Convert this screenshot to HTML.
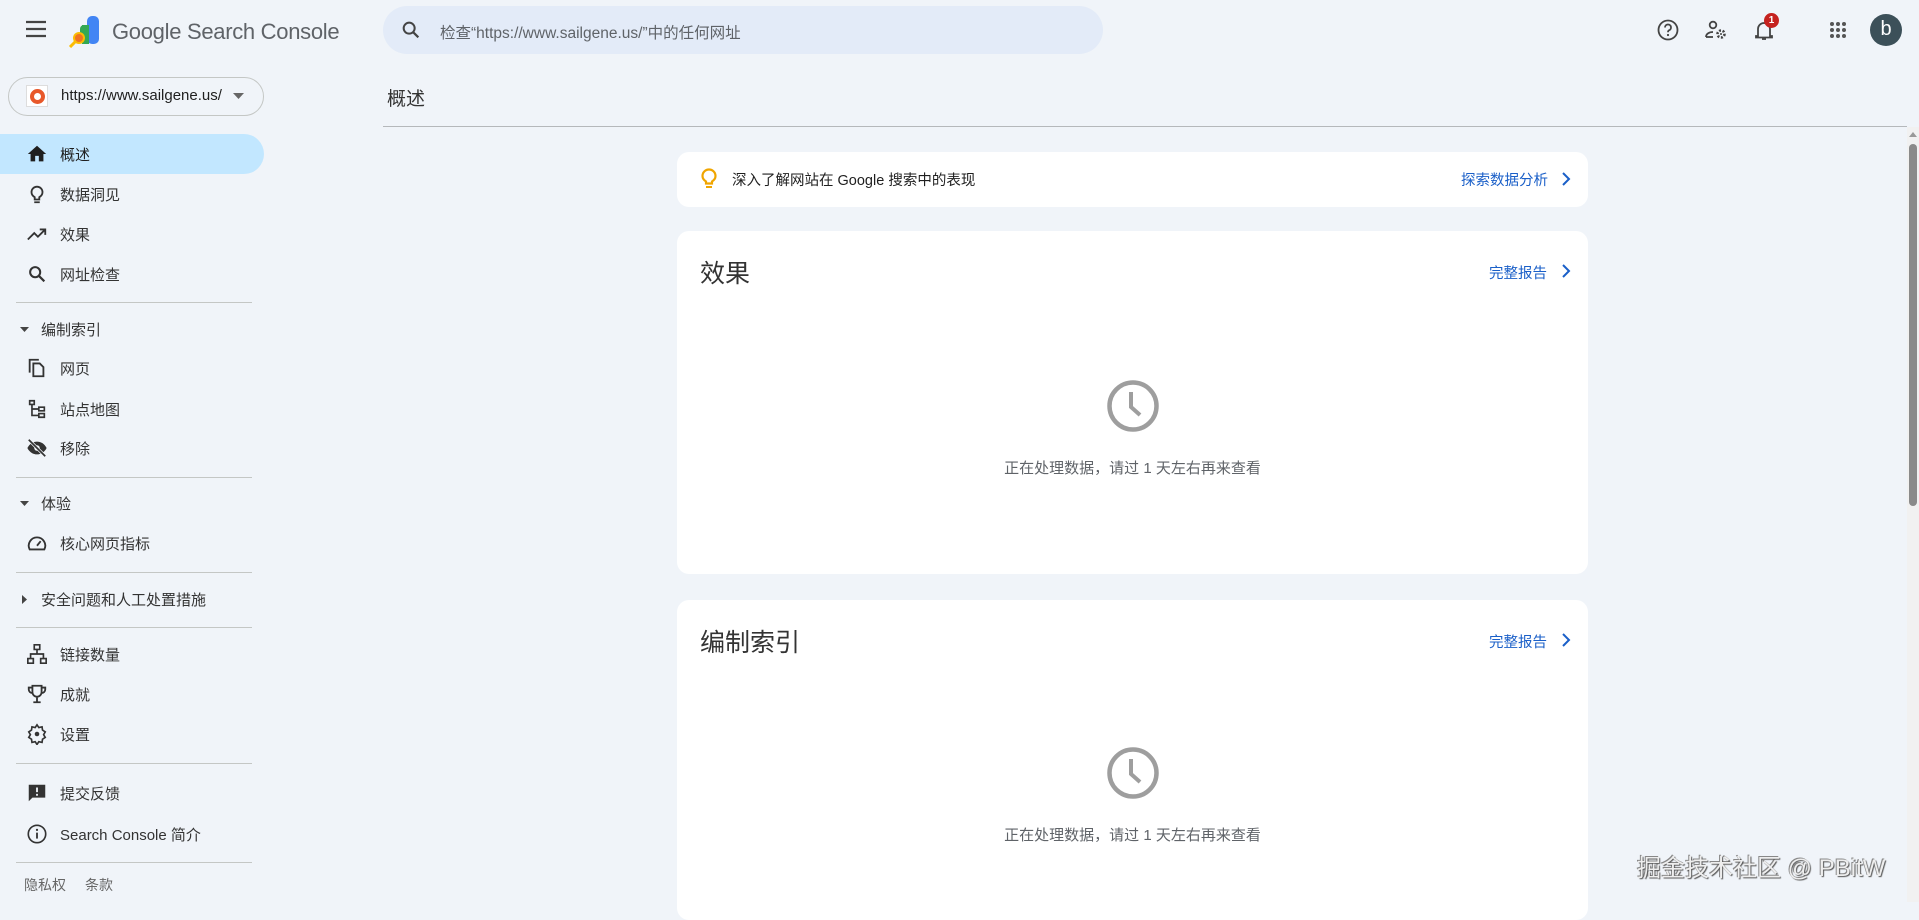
<!DOCTYPE html>
<html><head><meta charset="utf-8"><style>
*{box-sizing:border-box;margin:0;padding:0}
body{width:1919px;height:902px;overflow:hidden;background:#f0f4f9;font-family:"Liberation Sans","Noto Sans CJK SC",sans-serif;color:#1f1f1f;position:relative}
.abs{position:absolute}
.nav{position:absolute;left:0;width:263px;height:40px;display:flex;align-items:center;font-size:15px;color:#333}
.nav svg{position:absolute;left:26px;width:22px;height:22px}
.nav span{position:absolute;left:60px}
.sec{position:absolute;left:20px;font-size:15px;color:#333;display:flex;align-items:center}
.div{position:absolute;left:16px;width:236px;height:1px;background:#c4c7c5}
.card{position:absolute;left:677px;width:911px;background:#fff;border-radius:12px}
.link{position:absolute;color:#1a5fc8;font-size:14.5px}
.chev{position:absolute;width:10px;height:16px}
.msg{position:absolute;left:0;width:911px;text-align:center;font-size:15px;color:#5f6368}
</style></head><body>
<svg class="abs" style="left:25px;top:20px" width="22" height="18" viewBox="0 0 22 18"><path d="M1 2h20M1 9h20M1 16h20" stroke="#444" stroke-width="2.2"/></svg>
<svg class="abs" style="left:68px;top:14px" width="34" height="34" viewBox="0 0 34 34"><rect x="12" y="11" width="9" height="19" rx="4" fill="#34a853"/><rect x="19" y="2" width="12" height="28" rx="5" fill="#4285f4"/><rect x="14" y="11" width="7" height="19" fill="#34a853"/><circle cx="11" cy="24" r="6" fill="#fbbc04"/><circle cx="11" cy="24" r="4" fill="#ea4335" opacity=".6"/><path d="M7 28L2 33" stroke="#fbbc04" stroke-width="3"/></svg>
<div class="abs" style="left:112px;top:19px;font-size:22px;color:#5f6368;letter-spacing:-0.3px">Google Search Console</div>
<div class="abs" style="left:383px;top:6px;width:720px;height:48px;border-radius:24px;background:#e3ebf8"></div>
<svg class="abs" style="left:400px;top:19px" width="22" height="22" viewBox="0 0 24 24"><circle cx="10" cy="10" r="6" fill="none" stroke="#444" stroke-width="2.2"/><path d="M14.5 14.5L20 20" stroke="#444" stroke-width="2.4"/></svg>
<div class="abs" style="left:440px;top:21px;font-size:15.5px;color:#5f6368">检查“https://www.sailgene.us/”中的任何网址</div>
<svg class="abs" style="left:1656px;top:18px" width="24" height="24" viewBox="0 0 24 24"><circle cx="12" cy="12" r="9.5" fill="none" stroke="#444" stroke-width="1.8"/><path d="M9 9.5a3 3 0 1 1 4 2.8c-.8.4-1 1-1 2" fill="none" stroke="#444" stroke-width="1.8"/><circle cx="12" cy="17" r="1.1" fill="#444"/></svg>
<svg class="abs" style="left:1704px;top:18px" width="24" height="24" viewBox="0 0 24 24"><circle cx="9" cy="7" r="3.3" fill="none" stroke="#444" stroke-width="1.8"/><path d="M2 19c0-3 3-5 7-5" fill="none" stroke="#444" stroke-width="1.8"/><path d="M2 19h7" stroke="#444" stroke-width="1.8"/><circle cx="17" cy="16" r="3.5" fill="none" stroke="#444" stroke-width="2.6" stroke-dasharray="2 1.6"/><circle cx="17" cy="16" r="1" fill="#444"/></svg>
<svg class="abs" style="left:1752px;top:18px" width="24" height="24" viewBox="0 0 24 24"><path d="M6 18V11a6 6 0 0 1 12 0v7h2v1.5H4V18z" fill="none" stroke="#444" stroke-width="1.8"/><path d="M10 21h4" stroke="#444" stroke-width="1.8"/></svg>
<div class="abs" style="left:1764px;top:13px;width:15px;height:15px;border-radius:50%;background:#c5221f;color:#fff;font-size:10px;font-weight:bold;text-align:center;line-height:15px">1</div>
<svg class="abs" style="left:1829px;top:21px" width="18" height="18" viewBox="0 0 18 18" fill="#555"><circle cx="3" cy="3" r="2"/><circle cx="9" cy="3" r="2"/><circle cx="15" cy="3" r="2"/><circle cx="3" cy="9" r="2"/><circle cx="9" cy="9" r="2"/><circle cx="15" cy="9" r="2"/><circle cx="3" cy="15" r="2"/><circle cx="9" cy="15" r="2"/><circle cx="15" cy="15" r="2"/></svg>
<div class="abs" style="left:1870px;top:14px;width:32px;height:32px;border-radius:50%;background:#3c5059;color:#fff;font-size:20px;text-align:center;line-height:30px">b</div>
<div class="abs" style="left:8px;top:77px;width:256px;height:39px;border:1px solid #c4c7c5;border-radius:20px"></div>
<div class="abs" style="left:26px;top:85px;width:22px;height:22px;background:#fff;border:1px solid #ddd"><div style="margin:3px;width:15px;height:15px;border-radius:50%;border:4px solid #e8582a"></div></div>
<div class="abs" style="left:61px;top:87px;font-size:15px;color:#1f1f1f">https://www.sailgene.us/</div>
<svg class="abs" style="left:233px;top:93px" width="12" height="7"><path d="M0 0h11L5.5 6z" fill="#666"/></svg>
<div class="abs" style="left:0;top:134px;width:264px;height:40px;background:#c2e7ff;border-radius:0 20px 20px 0"></div>
<div class="nav" style="top:134px;color:#1f1f1f"><svg viewBox="0 0 24 24"><path d="M10 20v-6h4v6h5v-8h3L12 3 2 12h3v8z" fill="#1f1f1f"/></svg><span>概述</span></div>
<div class="nav" style="top:174px"><svg viewBox="0 0 24 24"><path d="M9 21h6M9.5 18h5v-2.5c2-1.2 3.5-3.2 3.5-5.5a6 6 0 0 0-12 0c0 2.3 1.5 4.3 3.5 5.5z" fill="none" stroke="#333" stroke-width="2"/></svg><span>数据洞见</span></div>
<div class="nav" style="top:214px"><svg viewBox="0 0 24 24"><path d="M2 18l7-7 4 4 7-7M15 7h6v6" fill="none" stroke="#333" stroke-width="2"/></svg><span>效果</span></div>
<div class="nav" style="top:254px"><svg viewBox="0 0 24 24"><circle cx="10" cy="10" r="5.5" fill="none" stroke="#333" stroke-width="2.2"/><path d="M14 14l6 6" stroke="#333" stroke-width="2.4"/></svg><span>网址检查</span></div>
<div class="div" style="top:302px"></div>
<div class="sec" style="top:319px"><svg width="10" height="6" style="margin-right:11px"><path d="M0 0h9L4.5 5z" fill="#444"/></svg>编制索引</div>
<div class="nav" style="top:348px"><svg viewBox="0 0 24 24"><path d="M4 17V3h10" fill="none" stroke="#333" stroke-width="2"/><path d="M8 7h7l4 4v10H8z" fill="none" stroke="#333" stroke-width="2"/></svg><span>网页</span></div>
<div class="nav" style="top:389px"><svg viewBox="0 0 24 24"><path d="M4 3h5v4H4zM14 10h6v4h-6zM14 17h6v4h-6zM6.5 7v12h7.5M6.5 12h7.5" fill="none" stroke="#333" stroke-width="1.8"/></svg><span>站点地图</span></div>
<div class="nav" style="top:428px"><svg viewBox="0 0 24 24"><path d="M1.5 12C4 7 8 5 12 5s8 2 10.5 7c-2.5 5-6.5 7-10.5 7S4 17 1.5 12z" fill="#333"/><circle cx="12" cy="12" r="3" fill="#f0f4f9"/><path d="M3 3l18 18" stroke="#f0f4f9" stroke-width="3.5"/><path d="M3 3l18 18" stroke="#333" stroke-width="1.8"/></svg><span>移除</span></div>
<div class="div" style="top:477px"></div>
<div class="sec" style="top:493px"><svg width="10" height="6" style="margin-right:11px"><path d="M0 0h9L4.5 5z" fill="#444"/></svg>体验</div>
<div class="nav" style="top:523px"><svg viewBox="0 0 24 24"><path d="M4 19a9 9 0 1 1 16 0z" fill="none" stroke="#333" stroke-width="2"/><path d="M12 15l4-5" stroke="#333" stroke-width="2"/></svg><span>核心网页指标</span></div>
<div class="div" style="top:572px"></div>
<div class="sec" style="top:589px"><svg width="6" height="10" style="margin-right:13px;margin-left:2px"><path d="M0 0v9l5-4.5z" fill="#444"/></svg>安全问题和人工处置措施</div>
<div class="div" style="top:627px"></div>
<div class="nav" style="top:634px"><svg viewBox="0 0 24 24"><path d="M9 2h6v5H9zM2 17h6v5H2zM16 17h6v5h-6zM12 7v5M5 17v-5h14v5" fill="none" stroke="#333" stroke-width="1.8"/></svg><span>链接数量</span></div>
<div class="nav" style="top:674px"><svg viewBox="0 0 24 24"><path d="M7 3h10v7a5 5 0 0 1-10 0zM7 5H3v2a4 4 0 0 0 4 4M17 5h4v2a4 4 0 0 1-4 4M12 15v5M8 21h8" fill="none" stroke="#333" stroke-width="2"/></svg><span>成就</span></div>
<div class="nav" style="top:714px"><svg viewBox="0 0 24 24"><path d="M12 2l2 3 3.5-.8.5 3.5 3 2-1.8 3 1.8 3-3 2-.5 3.5-3.5-.8-2 3-2-3-3.5.8-.5-3.5-3-2 1.8-3L3 9.7l3-2 .5-3.5 3.5.8z" fill="none" stroke="#333" stroke-width="1.8"/><circle cx="12" cy="12" r="2.5" fill="#333"/></svg><span>设置</span></div>
<div class="div" style="top:763px"></div>
<div class="nav" style="top:773px"><svg viewBox="0 0 24 24"><path d="M3 3h18v14H7l-4 4z" fill="#333"/><path d="M12 6v5M12 13v2" stroke="#f0f4f9" stroke-width="2"/></svg><span>提交反馈</span></div>
<div class="nav" style="top:814px"><svg viewBox="0 0 24 24"><circle cx="12" cy="12" r="9.5" fill="none" stroke="#333" stroke-width="1.8"/><path d="M12 10.5v6.5" stroke="#333" stroke-width="2"/><circle cx="12" cy="7.5" r="1.2" fill="#333"/></svg><span>Search Console 简介</span></div>
<div class="div" style="top:862px"></div>
<div class="abs" style="left:24px;top:875px;font-size:14px;color:#666">隐私权</div>
<div class="abs" style="left:85px;top:875px;font-size:14px;color:#666">条款</div>
<div class="abs" style="left:387px;top:84px;font-size:19px;color:#333">概述</div>
<div class="abs" style="left:383px;top:126px;width:1524px;height:1px;background:#b5b8bb"></div>
<div class="abs" style="left:1907px;top:127px;width:12px;height:775px;background:#f1f1f1"></div>
<svg class="abs" style="left:1908px;top:130px" width="10" height="8"><path d="M1 7h8L5 2z" fill="#999"/></svg>
<div class="abs" style="left:1909px;top:144px;width:8px;height:362px;background:#8a8a8a;border-radius:4px"></div>
<div class="card" style="top:152px;height:55px">
<svg class="abs" style="left:24px;top:16px" width="16" height="22" viewBox="0 0 16 22"><path d="M5 15.5h6v-2c2-1.3 3.5-3 3.5-5.5a6.5 6.5 0 0 0-13 0c0 2.5 1.5 4.2 3.5 5.5z" fill="none" stroke="#f0a500" stroke-width="2.2"/><path d="M5 19h6" stroke="#f0a500" stroke-width="2"/></svg>
<div class="abs" style="left:55px;top:17px;font-size:14.5px;color:#1f1f1f">深入了解网站在 Google 搜索中的表现</div>
<div class="link" style="left:784px;top:17px">探索数据分析</div>
<svg class="chev" style="left:884px;top:19px" viewBox="0 0 10 16"><path d="M2 2l6 6-6 6" fill="none" stroke="#1a5fc8" stroke-width="2"/></svg>
</div>
<div class="card" style="top:231px;height:343px">
<div class="abs" style="left:23px;top:23px;font-size:25px;color:#333">效果</div>
<div class="link" style="left:812px;top:31px">完整报告</div>
<svg class="chev" style="left:884px;top:32px" viewBox="0 0 10 16"><path d="M2 2l6 6-6 6" fill="none" stroke="#1a5fc8" stroke-width="2"/></svg>
<svg class="abs" style="left:428px;top:147px" width="56" height="56" viewBox="0 0 56 56"><circle cx="28" cy="28" r="23.5" fill="none" stroke="#9e9e9e" stroke-width="4.5"/><path d="M26 14v15l9 8" fill="none" stroke="#9e9e9e" stroke-width="4"/></svg>
<div class="msg" style="top:226px">正在处理数据，请过 1 天左右再来查看</div>
</div>
<div class="card" style="top:600px;height:320px">
<div class="abs" style="left:23px;top:23px;font-size:25px;color:#333">编制索引</div>
<div class="link" style="left:812px;top:31px">完整报告</div>
<svg class="chev" style="left:884px;top:32px" viewBox="0 0 10 16"><path d="M2 2l6 6-6 6" fill="none" stroke="#1a5fc8" stroke-width="2"/></svg>
<svg class="abs" style="left:428px;top:145px" width="56" height="56" viewBox="0 0 56 56"><circle cx="28" cy="28" r="23.5" fill="none" stroke="#9e9e9e" stroke-width="4.5"/><path d="M26 14v15l9 8" fill="none" stroke="#9e9e9e" stroke-width="4"/></svg>
<div class="msg" style="top:224px">正在处理数据，请过 1 天左右再来查看</div>
</div>
<div class="abs" style="left:1637px;top:848px;font-size:24px;color:#eee;text-shadow:1px 1px 1px #555,-1px -1px 0 #888">掘金技术社区 @ PBitW</div>
</body></html>
